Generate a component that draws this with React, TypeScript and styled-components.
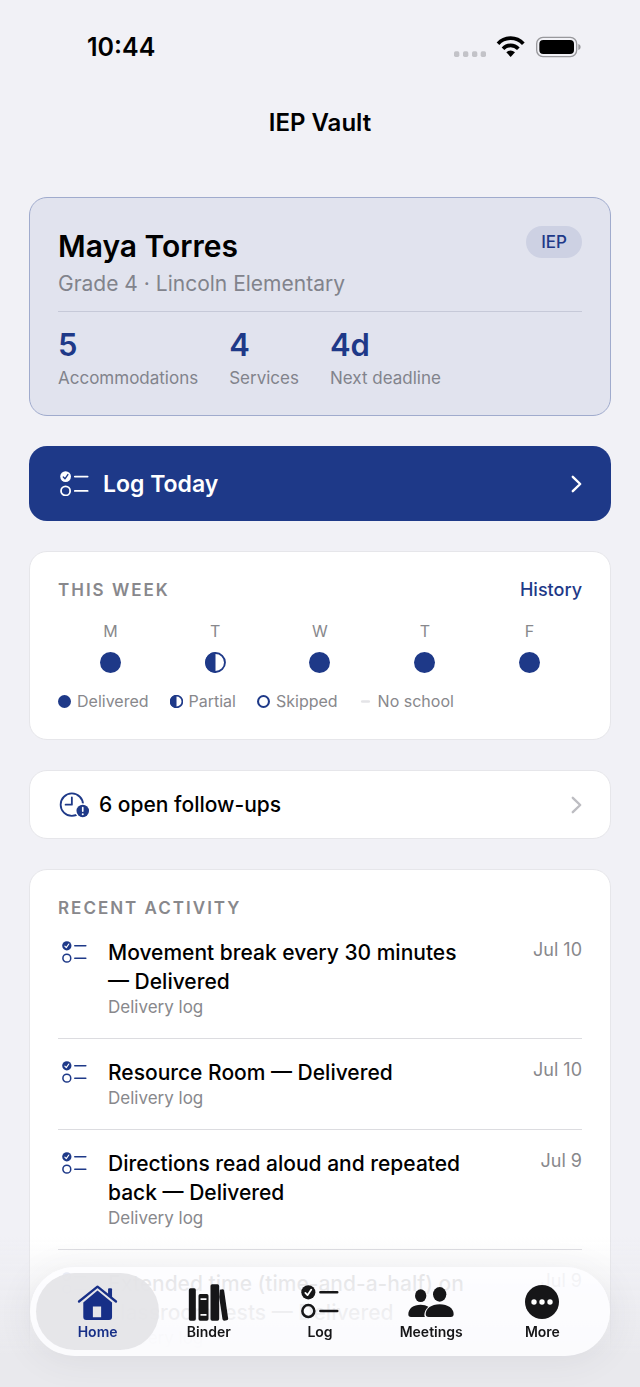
import type { ReactNode } from 'react';
import styled, { createGlobalStyle } from 'styled-components';

const navy = '#1e3988';
const grey = '#88888c';

type Status = 'delivered' | 'partial' | 'skipped' | 'none';

const stats = [
  { value: '5', label: 'Accommodations' },
  { value: '4', label: 'Services' },
  { value: '4d', label: 'Next deadline' },
];

const week: { day: string; status: Status }[] = [
  { day: 'M', status: 'delivered' },
  { day: 'T', status: 'partial' },
  { day: 'W', status: 'delivered' },
  { day: 'T', status: 'delivered' },
  { day: 'F', status: 'delivered' },
];

const legend: { label: string; status: Status }[] = [
  { label: 'Delivered', status: 'delivered' },
  { label: 'Partial', status: 'partial' },
  { label: 'Skipped', status: 'skipped' },
  { label: 'No school', status: 'none' },
];

const activity = [
  { title: 'Movement break every 30 minutes — Delivered', date: 'Jul 10' },
  { title: 'Resource Room — Delivered', date: 'Jul 10' },
  { title: 'Directions read aloud and repeated back — Delivered', date: 'Jul 9' },
  { title: 'Extended time (time-and-a-half) on classroom tests — Delivered', date: 'Jul 9' },
];

interface ChecklistProps {
  width: number;
  check: string;
  weight?: number;
}

function ChecklistIcon({ width, check, weight = 1.7 }: ChecklistProps) {
  return (
    <svg width={width} viewBox="0 0 28 25" fill="none" stroke="currentColor" strokeLinecap="round" aria-hidden="true">
      <circle cx="5.4" cy="5.4" r="5.2" fill="currentColor" stroke="none" />
      <path d="M3.2 5.8 4.8 7.5 7.6 3.4" stroke={check} strokeWidth="1.3" strokeLinejoin="round" />
      <circle cx="5.4" cy="19.2" r="4.4" strokeWidth={weight} />
      <path d="M14.3 5.4H26.7M14.3 19.2H26.7" strokeWidth={weight} />
    </svg>
  );
}

function StatusDot({ status, size }: { status: Status; size: number }) {
  return (
    <svg width={size} height={size} viewBox="0 0 20 20" aria-hidden="true">
      {status === 'delivered' && <circle cx="10" cy="10" r="10" fill={navy} />}
      {status === 'partial' && (
        <>
          <circle cx="10" cy="10" r="9" fill="none" stroke={navy} strokeWidth={size > 16 ? 1.8 : 2.6} />
          <path d="M10 0a10 10 0 0 0 0 20z" fill={navy} />
        </>
      )}
      {status === 'skipped' && <circle cx="10" cy="10" r="8.4" fill="none" stroke={navy} strokeWidth="3.2" />}
      {status === 'none' && <rect x="3" y="8" width="14" height="4" rx="2" fill="#e4e4e7" />}
    </svg>
  );
}

function ClockIcon() {
  return (
    <svg width="31" height="26" viewBox="0 0 94 78" fill="none" stroke={navy} strokeWidth="5.5" strokeLinecap="round" aria-hidden="true">
      <circle cx="39" cy="38" r="34" />
      <path d="M39 16v22H20" strokeLinejoin="round" />
      <circle cx="72" cy="57" r="23" fill="#fff" stroke="none" />
      <circle cx="72" cy="57" r="19" fill={navy} stroke="none" />
      <path d="M72 47v11" stroke="#fff" strokeWidth="5" />
      <circle cx="72" cy="67" r="3" fill="#fff" stroke="none" />
    </svg>
  );
}

function Chevron() {
  return (
    <svg width="11" height="18" viewBox="0 0 11 18" fill="none" stroke="currentColor" strokeWidth="2.4" strokeLinecap="round" strokeLinejoin="round" aria-hidden="true">
      <path d="M1.8 1.8 9.2 9 1.8 16.2" />
    </svg>
  );
}

function HomeIcon() {
  return (
    <svg width="41" height="37" viewBox="0 0 122 112" aria-hidden="true">
      <path d="M5 53 61 8l56 45" fill="none" stroke="currentColor" strokeWidth="7" strokeLinecap="round" strokeLinejoin="round" />
      <path d="M93 16q0-3 3-3h6q3 0 3 3v27L93 32z" fill="currentColor" />
      <path d="M61 20 105 56v44q0 9-9 9H27q-9 0-9-9V56zM47 68v33h25V68z" fill="currentColor" fillRule="evenodd" />
    </svg>
  );
}

function BinderIcon() {
  return (
    <svg width="41" height="38" viewBox="0 0 122 114" fill="currentColor" aria-hidden="true">
      <rect x="2" y="16" width="21" height="97" rx="5" />
      <path d="M36 33h20q5 0 5 5v70q0 5-5 5H36q-5 0-5-5V38q0-5 5-5zm1 13v5h18v-5zm0 47v5h18v-5z" fillRule="evenodd" />
      <rect x="67" y="4" width="26" height="109" rx="5" />
      <path d="m95 20 8-1q4 0 5 4l12 84q0 4-4 5l-8 1q-4 0-5-4L93 42z" />
    </svg>
  );
}

function MeetingsIcon() {
  return (
    <svg width="46" height="30" viewBox="0 0 138 90" fill="currentColor" aria-hidden="true">
      <ellipse cx="38" cy="26" rx="17" ry="19" />
      <ellipse cx="95" cy="22" rx="20" ry="22" />
      <path d="M1 82C1 64 16 53 38 53q14 0 23 6c-8 8-12 16-12 25 0 3 1 5 2 6H9q-8 0-8-8z" />
      <path d="M53 81c0-16 17-29 42-29s42 13 42 29q0 9-9 9H62q-9 0-9-9z" />
    </svg>
  );
}

function MoreIcon() {
  return (
    <svg width="34" height="34" viewBox="0 0 34 34" fill="currentColor" aria-hidden="true">
      <circle cx="17" cy="17" r="17" />
      <g fill="#fff">
        <circle cx="9" cy="17" r="2.7" />
        <circle cx="17" cy="17" r="2.7" />
        <circle cx="25" cy="17" r="2.7" />
      </g>
    </svg>
  );
}

const tabs: { label: string; icon: ReactNode }[] = [
  { label: 'Home', icon: <HomeIcon /> },
  { label: 'Binder', icon: <BinderIcon /> },
  { label: 'Log', icon: <ChecklistIcon width={38} check="#fff" weight={1.9} /> },
  { label: 'Meetings', icon: <MeetingsIcon /> },
  { label: 'More', icon: <MoreIcon /> },
];

function StatusIcons() {
  return (
    <svg width="128" height="22" viewBox="0 0 384 66" aria-hidden="true">
      <g fill="#c3c3c8">
        <rect x="0" y="46" width="16" height="17" rx="5" />
        <rect x="27" y="46" width="16" height="17" rx="5" />
        <rect x="54" y="46" width="16" height="17" rx="5" />
        <rect x="80" y="46" width="16" height="17" rx="5" />
      </g>
      <g fill="none" stroke="#000" strokeWidth="11">
        <path d="M132 23a52 52 0 0 1 76 0" />
        <path d="M147 38a32 32 0 0 1 46 0" />
      </g>
      <path d="M157 49q13-11 26 0l-13 14z" />
      <rect x="248" y="4" width="120" height="58" rx="19" fill="none" stroke="#98989c" strokeWidth="4" />
      <rect x="256" y="12" width="104" height="42" rx="12" />
      <path d="M373 24q7 2 7 9t-7 9z" fill="#98989c" />
    </svg>
  );
}

function App() {
  return (
    <Page>
      <GlobalStyle />
      <StatusBar>
        <Time>10:44</Time>
        <StatusIcons />
      </StatusBar>
      <Title>IEP Vault</Title>

      <Content>
        <StudentCard>
          <StudentHeader>
            <div>
              <StudentName>Maya Torres</StudentName>
              <School>Grade 4 · Lincoln Elementary</School>
            </div>
            <Badge>IEP</Badge>
          </StudentHeader>
          <Stats>
            {stats.map((s) => (
              <div key={s.label}>
                <StatValue>{s.value}</StatValue>
                <StatLabel>{s.label}</StatLabel>
              </div>
            ))}
          </Stats>
        </StudentCard>

        <LogButton type="button">
          <ChecklistIcon width={29} check={navy} />
          <Grow>Log Today</Grow>
          <Chevron />
        </LogButton>

        <Card>
          <CardHeader>
            <Overline>THIS WEEK</Overline>
            <HistoryLink href="#history">History</HistoryLink>
          </CardHeader>
          <Week>
            {week.map((d, i) => (
              <Day key={i}>
                {d.day}
                <StatusDot status={d.status} size={21} />
              </Day>
            ))}
          </Week>
          <Legend>
            {legend.map((l) => (
              <LegendItem key={l.label}>
                <StatusDot status={l.status} size={13} />
                {l.label}
              </LegendItem>
            ))}
          </Legend>
        </Card>

        <FollowUps type="button">
          <ClockIcon />
          <Grow>6 open follow-ups</Grow>
          <Chevron />
        </FollowUps>

        <Card>
          <CardHeader>
            <Overline>RECENT ACTIVITY</Overline>
          </CardHeader>
          <List>
            {activity.map((a) => (
              <Row key={a.title}>
                <RowIcon>
                  <ChecklistIcon width={25} check="#fff" />
                </RowIcon>
                <RowText>
                  <RowTitle>{a.title}</RowTitle>
                  <RowKind>Delivery log</RowKind>
                </RowText>
                <RowDate>{a.date}</RowDate>
              </Row>
            ))}
          </List>
        </Card>
      </Content>

      <BottomFade />
      <TabBar aria-label="Main">
        {tabs.map((t, i) => (
          <Tab key={t.label} href={`#${t.label.toLowerCase()}`} $active={i === 0}>
            <TabIcon>{t.icon}</TabIcon>
            {t.label}
          </Tab>
        ))}
      </TabBar>
    </Page>
  );
}

const GlobalStyle = createGlobalStyle`
  * {
    box-sizing: border-box;
  }

  body {
    margin: 0;
    background: #f1f1f6;
    color: #000;
    font-family: Inter, 'Liberation Sans', sans-serif;
  }

  h1, h2, h3, p, ul {
    margin: 0;
    padding: 0;
  }

  a {
    text-decoration: none;
  }

  button {
    font-family: inherit;
    cursor: pointer;
  }

  svg {
    display: block;
    flex-shrink: 0;
  }
`;

const Page = styled.div`
  min-height: 100vh;
`;

const StatusBar = styled.header`
  display: flex;
  align-items: center;
  justify-content: space-between;
  height: 94px;
  padding: 0 58px 0 87px;
`;

const Time = styled.span`
  font-size: 25px;
  font-weight: 600;
`;

const Title = styled.h1`
  font-size: 24px;
  font-weight: 600;
  line-height: 58px;
  text-align: center;
`;

const Content = styled.main`
  display: flex;
  flex-direction: column;
  gap: 30px;
  padding: 45px 29px 0;
`;

const Card = styled.section`
  padding: 27px 28px;
  background: #fff;
  border: 1px solid #e6e6ea;
  border-radius: 18px;
`;

const StudentCard = styled(Card)`
  padding-bottom: 26px;
  background: #e1e3ee;
  border-color: #a0abcd;
`;

const StudentHeader = styled.div`
  display: flex;
  align-items: flex-start;
  justify-content: space-between;
  padding-bottom: 11px;
  border-bottom: 1px solid #c6c9d8;
`;

const StudentName = styled.h2`
  font-size: 30px;
  font-weight: 600;
  line-height: 43px;
`;

const School = styled.p`
  color: #81838c;
  font-size: 21px;
  line-height: 32px;
`;

const Badge = styled.span`
  margin-top: 1px;
  padding: 0 15px;
  border-radius: 16px;
  background: #cdd1e3;
  color: ${navy};
  font-size: 17px;
  font-weight: 500;
  line-height: 32px;
`;

const Stats = styled.div`
  display: flex;
  gap: 31px;
  padding-top: 12px;
`;

const StatValue = styled.p`
  color: ${navy};
  font-size: 31px;
  font-weight: 600;
  line-height: 41px;
`;

const StatLabel = styled.p`
  margin-top: 2px;
  color: #81838c;
  font-size: 17px;
  line-height: 22px;
`;

const LogButton = styled.button`
  display: flex;
  align-items: center;
  gap: 14px;
  height: 75px;
  padding: 0 29px 0 31px;
  border: 0;
  border-radius: 18px;
  background: ${navy};
  color: #fff;
  font-size: 23px;
  font-weight: 600;
  text-align: left;
`;

const Grow = styled.span`
  flex: 1;
`;

const FollowUps = styled.button`
  display: flex;
  align-items: center;
  gap: 9px;
  height: 69px;
  padding: 0 28px 0 29px;
  border: 1px solid #e6e6ea;
  border-radius: 18px;
  background: #fff;
  color: #bdbdc2;
  font-size: 21px;
  font-weight: 500;
  text-align: left;

  & ${Grow} {
    color: #000;
  }
`;

const CardHeader = styled.div`
  display: flex;
  align-items: center;
  justify-content: space-between;
  line-height: 22px;
`;

const Overline = styled.h3`
  color: ${grey};
  font-size: 17px;
  font-weight: 600;
  letter-spacing: 2px;
`;

const HistoryLink = styled.a`
  color: ${navy};
  font-size: 18px;
  font-weight: 500;
`;

const Week = styled.div`
  display: flex;
  padding: 20px 0 18px;
`;

const Day = styled.div`
  flex: 1;
  display: flex;
  flex-direction: column;
  align-items: center;
  gap: 11px;
  color: ${grey};
  font-size: 16px;
  line-height: 20px;
`;

const Legend = styled.div`
  display: flex;
  flex-wrap: wrap;
  gap: 21px;
`;

const LegendItem = styled.span`
  display: flex;
  align-items: center;
  gap: 6px;
  color: ${grey};
  font-size: 16px;
  line-height: 21px;
`;

const List = styled.ul`
  list-style: none;
`;

const Row = styled.li`
  display: flex;
  align-items: flex-start;
  padding: 19px 0;

  & + & {
    border-top: 1px solid #dcdce0;
  }
`;

const RowIcon = styled.span`
  padding: 3px 21px 0 4px;
  color: ${navy};
`;

const RowText = styled.div`
  flex: 1;
  padding-right: 54px;
`;

const RowTitle = styled.p`
  font-size: 21px;
  font-weight: 500;
  line-height: 29px;
`;

const RowKind = styled.p`
  color: ${grey};
  font-size: 17px;
  line-height: 23px;
`;

const RowDate = styled.span`
  color: ${grey};
  font-size: 18px;
  line-height: 23px;
`;

const BottomFade = styled.div`
  position: fixed;
  right: 0;
  bottom: 0;
  left: 0;
  height: 150px;
  background: linear-gradient(rgba(233, 233, 237, 0), rgba(233, 233, 237, 0.5) 45%, #e9e9ed 78%);
  pointer-events: none;
`;

const TabBar = styled.nav`
  position: fixed;
  right: 30px;
  bottom: 31px;
  left: 30px;
  display: flex;
  padding: 6px 12px;
  border-radius: 45px;
  background: rgba(253, 253, 255, 0.88);
  box-shadow: 0 4px 36px rgba(60, 60, 80, 0.08);
`;

const Tab = styled.a<{ $active: boolean }>`
  flex: 1;
  display: flex;
  flex-direction: column;
  align-items: center;
  height: 77px;
  margin: 0 -6px;
  padding-top: 9px;
  border-radius: 39px;
  background: ${({ $active }) => ($active ? 'rgba(228, 228, 231, 0.92)' : 'transparent')};
  color: ${({ $active }) => ($active ? '#172f87' : '#161618')};
  font-size: 14px;
  font-weight: 600;
  line-height: 20px;
`;

const TabIcon = styled.span`
  display: flex;
  align-items: center;
  height: 40px;
`;

export default App;
